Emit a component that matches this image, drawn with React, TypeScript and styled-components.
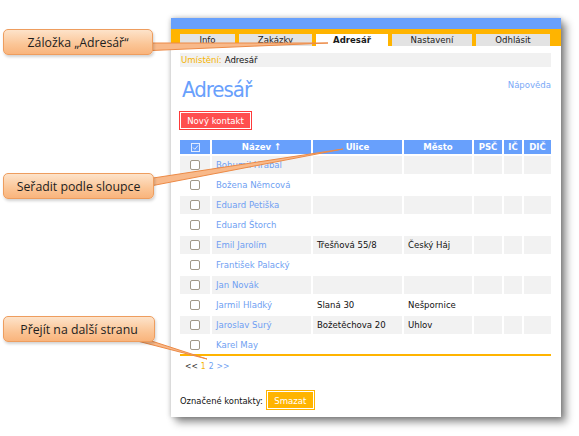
import React from "react";
import styled, { createGlobalStyle } from "styled-components";

const FONT = `"Liberation Sans Narrow", "DejaVu Sans Condensed", "Liberation Sans", sans-serif`;

const GlobalStyle = createGlobalStyle`
  html, body { margin: 0; padding: 0; background: #ffffff; }
  body { font-family: ${FONT}; }
  * { box-sizing: border-box; }
`;

const Page = styled.div`
  position: relative;
  width: 579px;
  height: 436px;
  overflow: hidden;
  padding: 18px 0 0 171px;
  background: #fff;
`;

const Window = styled.div`
  width: 390px;
  height: 399px;
  background: #fff;
  box-shadow: 5px 5px 8px rgba(0, 0, 0, 0.45), 0 0 5px rgba(0, 0, 0, 0.25);
  display: flex;
  flex-direction: column;
`;

const TopBar = styled.div`
  height: 11px;
  background: #68a0fc;
`;

const TabBar = styled.div`
  height: 17px;
  background: #ffb400;
  display: flex;
  align-items: flex-end;
  gap: 4px;
  padding-left: 9px;
`;

const Tab = styled.div<{ $w: number; $active?: boolean }>`
  width: ${(p) => p.$w}px;
  height: 12px;
  background: ${(p) => (p.$active ? "#ffffff" : "#e3e3e3")};
  color: #1a1a1a;
  font-size: 9.5px;
  font-weight: ${(p) => (p.$active ? 700 : 400)};
  line-height: 12px;
  text-align: center;
`;

const Content = styled.div`
  flex: 1;
  display: flex;
  flex-direction: column;
  padding: 7px 10px 0 9px;
`;

const Breadcrumb = styled.div`
  height: 14px;
  background: #f1f1f1;
  font-size: 9.5px;
  line-height: 14px;
  padding-left: 1px;
  color: #111;
`;

const Crumb = styled.span`
  color: #f5b300;
  margin-right: 3px;
`;

const HeadRow = styled.div`
  display: flex;
  justify-content: space-between;
  align-items: flex-start;
  margin-top: 9px;
  height: 28px;
`;

const Heading = styled.h1`
  margin: 0;
  font-family: ${FONT};
  font-weight: 400;
  font-size: 22px;
  letter-spacing: -1px;
  line-height: 28px;
  color: #68a0fc;
  padding-left: 2px;
`;

const HelpLink = styled.a`
  font-size: 9.5px;
  color: #7aa9f7;
  text-decoration: none;
  margin-top: 3px;
`;

const NewButton = styled.button`
  align-self: flex-start;
  margin-top: 8px;
  height: 17px;
  width: 71px;
  padding: 0;
  background: #ff4f4f;
  border: 1px solid #ffffff;
  box-shadow: 0 0 0 1px #ff3a3a;
  color: #fff;
  font-family: ${FONT};
  font-size: 9.5px;
  line-height: 14px;
`;

const Grid = styled.div`
  margin-top: 11px;
  display: grid;
  grid-template-columns: 30px 99px 89px 68px 28px 18px 27px;
  column-gap: 2px;
  row-gap: 2px;
  width: 371px;
`;

const HeadCell = styled.div`
  height: 14px;
  background: #68a0fc;
  color: #fff;
  font-weight: 700;
  font-size: 9.5px;
  line-height: 14px;
  text-align: center;
  display: flex;
  align-items: center;
  justify-content: center;
`;

const Cell = styled.div<{ $shade: boolean; $center?: boolean }>`
  height: 18px;
  background: ${(p) => (p.$shade ? "#f2f2f2" : "#ffffff")};
  font-size: 9.5px;
  line-height: 18px;
  color: #111;
  padding-left: ${(p) => (p.$center ? 0 : 4)}px;
  display: flex;
  align-items: center;
  justify-content: ${(p) => (p.$center ? "center" : "flex-start")};
  white-space: nowrap;
  overflow: hidden;
`;

const NameLink = styled.a`
  color: #6f9ff2;
  text-decoration: none;
`;

const Check = styled.span`
  width: 10px;
  height: 10px;
  border: 1px solid #a09888;
  border-radius: 2px;
  background: #fff;
`;

const Rule = styled.div`
  width: 371px;
  height: 2px;
  background: #ffb400;
`;

const Pager = styled.div`
  margin-top: 3px;
  padding-left: 5px;
  font-size: 8.5px;
  line-height: 14px;
  display: flex;
  gap: 3px;
`;

const PageLink = styled.span<{ $c: string }>`
  color: ${(p) => p.$c};
`;

const Footer = styled.div`
  margin-top: 18px;
  display: flex;
  align-items: center;
  gap: 4px;
  font-size: 9.3px;
  color: #111;
`;

const DeleteButton = styled.button`
  height: 18px;
  width: 47px;
  padding: 0;
  background: #ffb400;
  border: 1px solid #ffffff;
  box-shadow: 0 0 0 1px #ffb400;
  color: #fff;
  font-family: ${FONT};
  font-size: 9.5px;
  line-height: 15px;
`;

const Tails = styled.svg`
  position: absolute;
  left: 0;
  top: 0;
  pointer-events: none;
`;

const Callout = styled.div<{ $x: number; $y: number; $w: number }>`
  position: absolute;
  left: ${(p) => p.$x}px;
  top: ${(p) => p.$y}px;
  width: ${(p) => p.$w}px;
  height: 26px;
  border: 1px solid #ee9d5e;
  border-radius: 5px;
  background: linear-gradient(#fde3ca, #fbc596 60%, #f9b47c);
  box-shadow: 1px 2px 3px rgba(0, 0, 0, 0.18);
  font-family: "Open Sans", "Liberation Sans", sans-serif;
  font-size: 12.3px;
  color: #1e1e1e;
  display: flex;
  align-items: center;
  justify-content: center;
`;

type Row = { name: string; street?: string; city?: string };

const rows: Row[] = [
  { name: "Bohumil Hrabal" },
  { name: "Božena Němcová" },
  { name: "Eduard Petiška" },
  { name: "Eduard Štorch" },
  { name: "Emil Jarolím", street: "Třešňová 55/8", city: "Český Háj" },
  { name: "František Palacký" },
  { name: "Jan Novák" },
  { name: "Jarmil Hladký", street: "Slaná 30", city: "Nešpornice" },
  { name: "Jaroslav Surý", street: "Božetěchova 20", city: "Uhlov" },
  { name: "Karel May" },
];

const tabs = [
  { label: "Info", w: 55 },
  { label: "Zakázky", w: 73 },
  { label: "Adresář", w: 72, active: true },
  { label: "Nastavení", w: 80 },
  { label: "Odhlásit", w: 74 },
];

const HeaderCheck = () => (
  <svg width="9" height="9" viewBox="0 0 9 9">
    <rect x="0.5" y="0.5" width="8" height="8" fill="none" stroke="#dfeaff" strokeWidth="1" />
    <path d="M2 4.5 L3.8 6.3 L7 2.5" fill="none" stroke="#dfeaff" strokeWidth="1" />
  </svg>
);

export default function App() {
  return (
    <>
      <GlobalStyle />
      <Page>
        <Window>
          <TopBar />
          <TabBar>
            {tabs.map((t) => (
              <Tab key={t.label} $w={t.w} $active={t.active}>
                {t.label}
              </Tab>
            ))}
          </TabBar>
          <Content>
            <Breadcrumb>
              <Crumb>Umístění:</Crumb>Adresář
            </Breadcrumb>
            <HeadRow>
              <Heading>Adresář</Heading>
              <HelpLink href="#">Nápověda</HelpLink>
            </HeadRow>
            <NewButton>Nový kontakt</NewButton>
            <Grid>
              <HeadCell>
                <HeaderCheck />
              </HeadCell>
              <HeadCell>Název ↑</HeadCell>
              <HeadCell>Ulice</HeadCell>
              <HeadCell>Město</HeadCell>
              <HeadCell>PSČ</HeadCell>
              <HeadCell>IČ</HeadCell>
              <HeadCell>DIČ</HeadCell>
              {rows.map((r, i) => {
                const shade = i % 2 === 0;
                return (
                  <React.Fragment key={r.name}>
                    <Cell $shade={shade} $center>
                      <Check />
                    </Cell>
                    <Cell $shade={shade}>
                      <NameLink href="#">{r.name}</NameLink>
                    </Cell>
                    <Cell $shade={shade}>{r.street ?? ""}</Cell>
                    <Cell $shade={shade}>{r.city ?? ""}</Cell>
                    <Cell $shade={shade} />
                    <Cell $shade={shade} />
                    <Cell $shade={shade} />
                  </React.Fragment>
                );
              })}
            </Grid>
            <Rule />
            <Pager>
              <PageLink $c="#333">&lt;&lt;</PageLink>
              <PageLink $c="#f5b300">1</PageLink>
              <PageLink $c="#6f9ff2">2</PageLink>
              <PageLink $c="#6f9ff2">&gt;&gt;</PageLink>
            </Pager>
            <Footer>
              Označené kontakty:
              <DeleteButton>Smazat</DeleteButton>
            </Footer>
          </Content>
        </Window>

        <Tails width="579" height="436" viewBox="0 0 579 436">
          <polygon points="140,43 140,51 328,43" fill="#f8b98a" stroke="#ec8a46" strokeWidth="1" />
          <polygon points="140,180 140,188 343,149" fill="#f8b98a" stroke="#ec8a46" strokeWidth="1" />
          <polygon points="118,336 136,336 207,359" fill="#f8b98a" stroke="#ec8a46" strokeWidth="1" />
        </Tails>

        <Callout $x={3} $y={29} $w={150}>Záložka „Adresář“</Callout>
        <Callout $x={3} $y={173} $w={151}>Seřadit podle sloupce</Callout>
        <Callout $x={3} $y={316} $w={152}>Přejít na další stranu</Callout>
      </Page>
    </>
  );
}
